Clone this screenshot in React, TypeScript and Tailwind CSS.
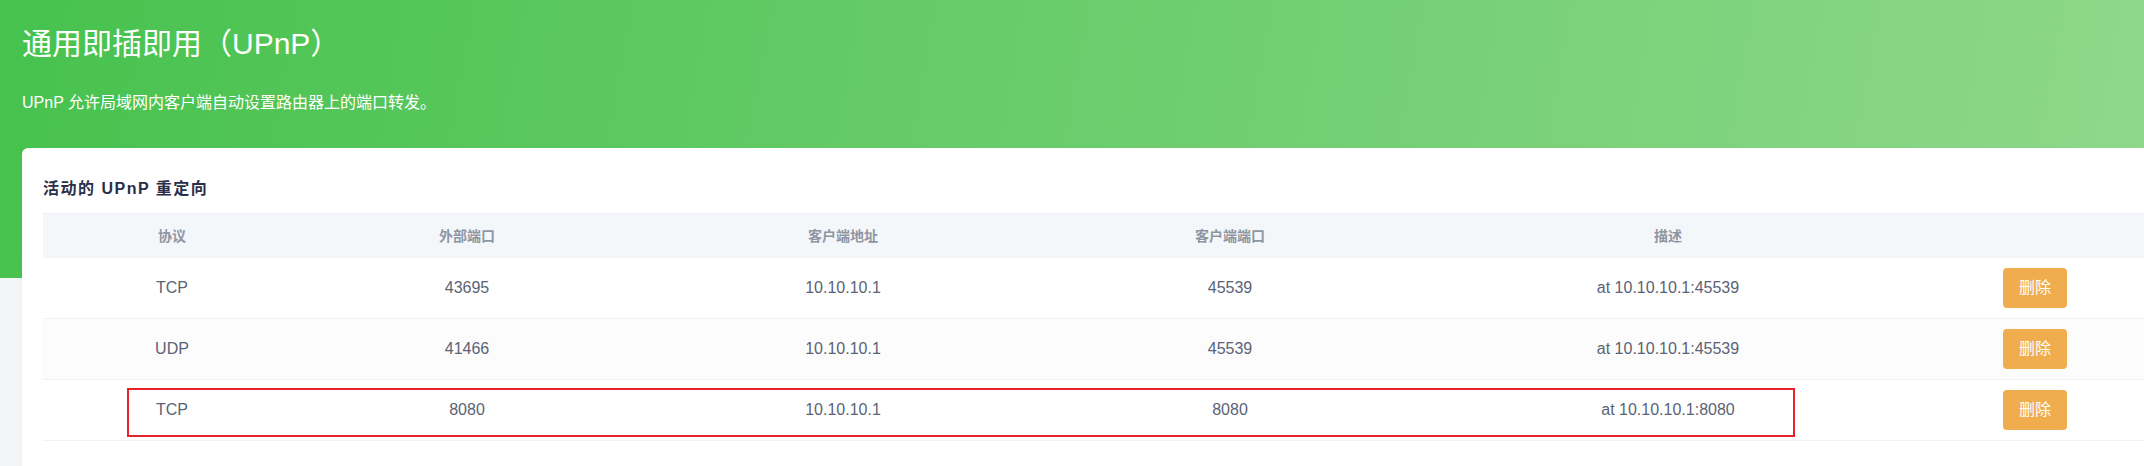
const rows = [
  { proto: 'TCP', ext: '43695', addr: '10.10.10.1', port: '45539', desc: 'at 10.10.10.1:45539' },
  { proto: 'UDP', ext: '41466', addr: '10.10.10.1', port: '45539', desc: 'at 10.10.10.1:45539' },
  { proto: 'TCP', ext: '8080', addr: '10.10.10.1', port: '8080', desc: 'at 10.10.10.1:8080', marked: true },
];

const cols = 'grid grid-cols-[258px_332px_420px_354px_522px_212px_80px]';

export default function App() {
  return (
    <div className="h-[466px] w-full overflow-hidden bg-[#f4f5f6] font-[family-name:'Liberation_Sans','Noto_Sans_CJK_SC',sans-serif]">
      {/* green hero */}
      <div className="h-[278px] bg-[linear-gradient(100deg,#47c24e_0%,#8fd88b_100%)] px-[22px] pt-[24px] text-white">
        <h1 className="text-[30px] leading-[40px] font-normal">通用即插即用（UPnP）</h1>
        <p className="mt-[27px] text-[16px] leading-[24px]">UPnP 允许局域网内客户端自动设置路由器上的端口转发。</p>
      </div>

      {/* card */}
      <div className="-mt-[130px] ml-[22px] w-[2220px] rounded-md bg-white px-[21px] pt-[31px] pb-[30px] shadow-[0_2px_6px_rgba(0,0,0,0.04)]">
        <h2 className="mb-[14px] text-[16px] leading-[20px] font-semibold tracking-[1.5px] text-[#2b2e48]">
          活动的 UPnP 重定向
        </h2>

        <div className={`${cols} h-[45px] items-center border-t border-[#eceff3] bg-[#f4f7fa] text-center text-[14px] font-semibold text-[#8e96a3]`}>
          <div>协议</div>
          <div>外部端口</div>
          <div>客户端地址</div>
          <div>客户端端口</div>
          <div>描述</div>
          <div></div>
          <div></div>
        </div>

        {rows.map((r, i) => (
          <div
            key={i}
            className={`${cols} relative h-[61px] items-center border-b border-[#f1f2f4] text-center text-[16px] text-[#5a6376] ${i % 2 === 1 ? 'bg-[#fcfcfc]' : 'bg-white'}`}
          >
            <div>{r.proto}</div>
            <div>{r.ext}</div>
            <div>{r.addr}</div>
            <div>{r.port}</div>
            <div>{r.desc}</div>
            <div className="flex justify-center">
              <button className="h-[40px] w-[64px] rounded-[4px] bg-[#f0ad4e] text-[16px] text-white">删除</button>
            </div>
            <div></div>
            {r.marked && (
              <div className="pointer-events-none absolute top-[8px] left-[84px] h-[49px] w-[1668px] border-2 border-[#e8212b]" />
            )}
          </div>
        ))}
      </div>
    </div>
  );
}
